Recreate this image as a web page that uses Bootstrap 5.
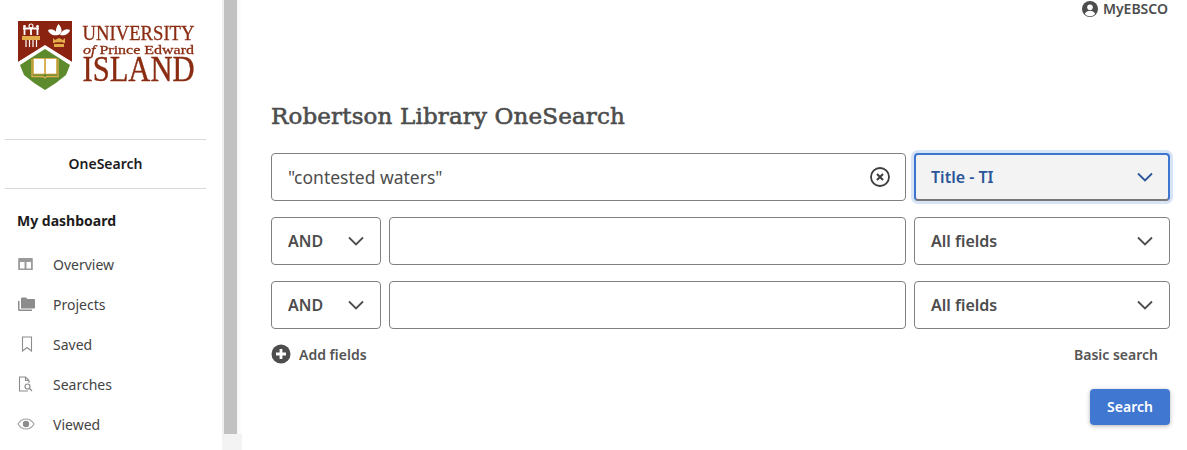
<!DOCTYPE html>
<html lang="en"><head><meta charset="utf-8"><title>OneSearch</title>
<link href="https://cdn.jsdelivr.net/npm/bootstrap@5.3.0/dist/css/bootstrap.min.css" rel="stylesheet">
<style>
html,body{height:450px;overflow:hidden}
body{font-family:"Noto Sans","Open Sans",sans-serif;color:#4d4d4d;background:#fff}
.shell{height:450px}
.side{width:222px;flex:none;padding:0 16px 0 5px}
.logo-box{height:139px;padding:20px 0 0 12px;box-sizing:border-box}
.logo-box svg{display:block;filter:blur(.35px)}
.one{height:50px;border-top:1px solid #d9d9d9;border-bottom:1px solid #d9d9d9;font-size:14px;font-weight:600;color:#1c1c1c;width:201px;padding-bottom:2px}
.dash{font-size:14px;font-weight:700;color:#1c1c1c;margin:22px 0 13px 12px;line-height:20px}
.navi{height:40px;font-size:14px;color:#444;padding-left:12px}
.navi a{color:#444;text-decoration:none}
.navi .ic{width:36px;flex:none;display:block}
.track{width:20px;flex:none;background:#f3f3f3;position:relative}
.thumb{height:434px;background:linear-gradient(to right,#f0f0f0 0,#f0f0f0 2px,#c1c1c1 2px,#c1c1c1 15px,#f6f6f6 15px,#fff 20px)}
.main{flex:1;min-width:0;padding:0 17px 0 29px}
.me{height:18px;margin-bottom:82px;font-size:14px;font-weight:600;line-height:18px;color:#4d4d4d;padding-right:2px;gap:5px}
.ttl{font-family:"DejaVu Serif","Liberation Serif",serif;font-size:23px;font-weight:400;-webkit-text-stroke:.6px #4d4d4d;color:#4d4d4d;line-height:32px;margin:0 0 21px;letter-spacing:.15px}
.line{height:48px;margin-bottom:16px;gap:8px}
.fld{height:48px;border:1px solid #808080;border-radius:4px;background:#fff;font-size:17.500px;color:#4d4d4d;padding:0 16px;box-shadow:none}
.fld:focus{border-color:#808080;box-shadow:none}
.q{flex:1;min-width:0}
.pick{width:256px;flex:none;font-weight:600;font-size:16px}
.op{width:110px;flex:none;font-weight:600;font-size:16px}
.pick.on{background:#f3f3f3;color:#2a5699;border:2px solid #3d75cf;border-bottom-color:#777;padding:0 15px;box-shadow:0 0 0 3px #d7e4f6}
.clear{right:16px;top:14px}
.foot{height:20px;margin-top:-1px}
.add{font-size:14px;font-weight:600;color:#555;gap:8px}
.basic{font-size:14px;font-weight:600;color:#555;padding-right:12px}
.go{width:80px;height:36px;margin-top:25px;background:#3f77d1;color:#fff;border:0;border-radius:4px;font-size:14px;font-weight:600;box-shadow:0 1px 4px rgba(0,0,0,.3);padding:0 0 2px}
.go:hover{background:#3f77d1;color:#fff}
</style></head>
<body>
<div class="shell d-flex">
  <aside class="side">
    <div class="logo-box">
      <svg width="185" height="86" viewBox="0 0 185 86" role="img" aria-label="University of Prince Edward Island">
        <path d="M1 1H55V42L28 26L1 42Z" fill="#8a2410"/>
        <path d="M1 42L28 25L55 42V46L28 29L1 46Z" fill="#fff"/>
        <path d="M3 45L28 29L53 45L49 55Q40 63 28 70Q16 63 7 55Z" fill="#5d8a2c"/>
        <path d="M16.500 38.500H27.500V54H16.500ZM28.500 38.500H39.500V54H28.500Z" fill="#fff" stroke="#e3ac4a" stroke-width=".8"/>
        <path d="M15 39V56.500H26L28 58L30 56.500H41V39" fill="none" stroke="#e3ac4a" stroke-width="1.300"/>
        <path d="M6 8.500H22M7.500 8.500V15M14 8.500V15M20.500 8.500V15" stroke="#fff" stroke-width="1.800" fill="none"/>
        <circle cx="14" cy="6" r="2" fill="none" stroke="#fff" stroke-width="1.100"/><circle cx="7.500" cy="6.500" r="1.400" fill="#fff"/><circle cx="20.500" cy="6.500" r="1.400" fill="#fff"/>
        <path d="M5 16H23V20H5Z" fill="#e3ac4a"/>
        <path d="M9 20V27M12.500 20V27M16 20V27M19.500 20V27" stroke="#fff" stroke-width="1.200" fill="none"/>
        <path d="M42 15C38 14 38 9 41.500 4C45 8 46 12 42 15ZM41 15C36 16 32 14 31 10C35 8 39 10 41 15ZM43 15C48 16 52 14 53 10C49 8 45 10 43 15Z" fill="#fff"/>
        <path d="M36 18L38 20L42 18L46 20L48 18V23H36Z" fill="#e3ac4a"/>
        <path d="M37 24H47V27H37Z" fill="#e3ac4a"/>
        <path d="M38 22.500H46" stroke="#8a2410" stroke-width=".7"/>
        <text x="65.500" y="20" font-family="Liberation Serif,serif" font-size="20" fill="#8a2c12" stroke="#8a2c12" stroke-width=".3" textLength="112" lengthAdjust="spacingAndGlyphs">UNIVERSITY</text>
        <text x="66" y="33.500" font-family="Liberation Serif,serif" font-size="13.500" fill="#8a2c12" stroke="#8a2c12" stroke-width=".3" textLength="111" lengthAdjust="spacingAndGlyphs"><tspan font-style="italic">of</tspan> Prince Edward</text>
        <text x="65.500" y="61" font-family="Liberation Serif,serif" font-size="35" fill="#8a2c12" stroke="#8a2c12" stroke-width=".4" textLength="112" lengthAdjust="spacingAndGlyphs">ISLAND</text>
      </svg>
    </div>
    <div class="one d-flex align-items-center justify-content-center">OneSearch</div>
    <div class="dash">My dashboard</div>
    <div class="navi d-flex align-items-center">
      <svg class="ic" width="36" height="16" viewBox="0 0 36 16"><path d="M2 2h13a.800.800 0 0 1 .800.800V14H1.200V2.800A.800.800 0 0 1 2 2z" fill="#9a9a9a"/><path d="M3 6h4.500v6.500H3zM9.500 6H14v6.500H9.500z" fill="#fff"/></svg>
      <a href="#">Overview</a></div>
    <div class="navi d-flex align-items-center">
      <svg class="ic" width="36" height="16" viewBox="0 0 36 16"><path d="M4 2.500a1 1 0 0 1 1-1h4l1.500 1.500H17a1 1 0 0 1 1 1v7.500a1 1 0 0 1-1 1H4z" fill="#8c8c8c"/><path d="M1 5v8.500a1.500 1.500 0 0 0 1.500 1.500H15v-1.500H3a.5.5 0 0 1-.5-.5V5z" fill="#8c8c8c"/></svg>
      <a href="#">Projects</a></div>
    <div class="navi d-flex align-items-center">
      <svg class="ic" width="36" height="16" viewBox="0 0 36 16"><path d="M5.500 1h9v14l-4.500-3.500L5.500 15z" fill="none" stroke="#8c8c8c" stroke-width="1.100"/></svg>
      <a href="#">Saved</a></div>
    <div class="navi d-flex align-items-center">
      <svg class="ic" width="36" height="16" viewBox="0 0 36 16"><path d="M11 15H2.500V1H8.500L12 4.500V7M8.500 1V4.500H12" fill="none" stroke="#8c8c8c" stroke-width="1.100"/><circle cx="10.500" cy="10.500" r="2.500" fill="none" stroke="#8c8c8c" stroke-width="1.200"/><path d="M12.500 12.500L15 15" stroke="#8c8c8c" stroke-width="1.300"/></svg>
      <a href="#">Searches</a></div>
    <div class="navi d-flex align-items-center">
      <svg class="ic" width="36" height="16" viewBox="0 0 36 16"><path d="M1 8c2-3.500 5-5 8-5s6 1.500 8 5c-2 3.500-5 5-8 5s-6-1.500-8-5z" fill="none" stroke="#a0a0a0" stroke-width="1.100"/><circle cx="9" cy="8" r="3.200" fill="#8c8c8c"/></svg>
      <a href="#">Viewed</a></div>
  </aside>
  <div class="track"><div class="thumb"></div></div>
  <main class="main">
    <div class="me d-flex justify-content-end align-items-center">
      <svg width="16" height="16" viewBox="0 0 16 16"><circle cx="8" cy="8" r="8" fill="#4d4d4d"/><circle cx="8" cy="6.200" r="2.800" fill="#fff"/><path d="M2.800 13c1-2.500 3-3.200 5.200-3.200s4.200.7 5.200 3.200a7 7 0 0 1-10.400 0z" fill="#fff"/></svg>
      <span>MyEBSCO</span>
    </div>
    <h1 class="ttl">Robertson Library OneSearch</h1>
    <form>
      <div class="line d-flex">
        <div class="q position-relative">
          <input class="form-control fld" value="&quot;contested waters&quot;" aria-label="Search term">
          <svg class="clear position-absolute" width="20" height="20" viewBox="0 0 20 20"><circle cx="10" cy="10" r="9" fill="none" stroke="#3d3d3d" stroke-width="1.800"/><path d="M7 7l6 6M13 7l-6 6" stroke="#3d3d3d" stroke-width="2"/></svg>
        </div>
        <div class="fld pick on d-flex align-items-center justify-content-between"><span>Title - TI</span>
          <svg width="16" height="10" viewBox="0 0 16 10"><path d="M1 1.500L8 8.500l7-7" fill="none" stroke="#2a5699" stroke-width="1.800"/></svg></div>
      </div>
      <div class="line d-flex">
        <div class="fld op d-flex align-items-center justify-content-between"><span>AND</span>
          <svg width="16" height="10" viewBox="0 0 16 10"><path d="M1 1.500L8 8.500l7-7" fill="none" stroke="#4d4d4d" stroke-width="1.800"/></svg></div>
        <input class="form-control fld q" aria-label="Search term">
        <div class="fld pick d-flex align-items-center justify-content-between"><span>All fields</span>
          <svg width="16" height="10" viewBox="0 0 16 10"><path d="M1 1.500L8 8.500l7-7" fill="none" stroke="#4d4d4d" stroke-width="1.800"/></svg></div>
      </div>
      <div class="line d-flex">
        <div class="fld op d-flex align-items-center justify-content-between"><span>AND</span>
          <svg width="16" height="10" viewBox="0 0 16 10"><path d="M1 1.500L8 8.500l7-7" fill="none" stroke="#4d4d4d" stroke-width="1.800"/></svg></div>
        <input class="form-control fld q" aria-label="Search term">
        <div class="fld pick d-flex align-items-center justify-content-between"><span>All fields</span>
          <svg width="16" height="10" viewBox="0 0 16 10"><path d="M1 1.500L8 8.500l7-7" fill="none" stroke="#4d4d4d" stroke-width="1.800"/></svg></div>
      </div>
      <div class="foot d-flex justify-content-between align-items-center">
        <div class="add d-flex align-items-center">
          <svg width="20" height="20" viewBox="0 0 20 20"><circle cx="10" cy="10" r="9.500" fill="#4d4d4d"/><path d="M10 5v10M5 10h10" stroke="#fff" stroke-width="2.800"/></svg>
          <span>Add fields</span></div>
        <div class="basic">Basic search</div>
      </div>
      <div class="d-flex justify-content-end">
        <button type="button" class="btn go">Search</button>
      </div>
    </form>
  </main>
</div>
</body></html>
